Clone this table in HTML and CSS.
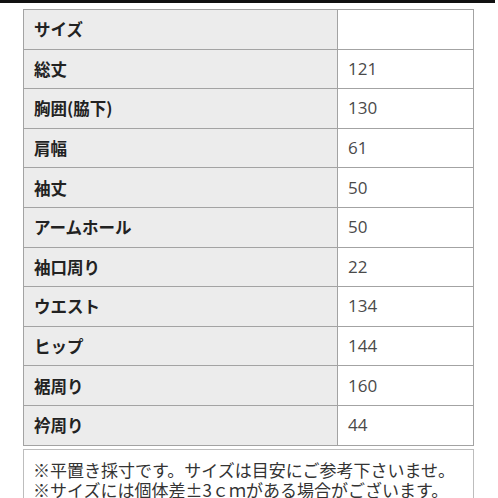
FILE: index.html
```html
<!DOCTYPE html>
<html lang="ja">
<head>
<meta charset="utf-8">
<link rel="stylesheet" href="styles.css">
</head>
<body>
<div class="topbar"></div>
<table class="size-table">
  <tr><th>サイズ</th><td></td></tr>
  <tr><th>総丈</th><td>121</td></tr>
  <tr><th>胸囲(脇下)</th><td>130</td></tr>
  <tr><th>肩幅</th><td>61</td></tr>
  <tr><th>袖丈</th><td>50</td></tr>
  <tr><th>アームホール</th><td>50</td></tr>
  <tr><th>袖口周り</th><td>22</td></tr>
  <tr><th>ウエスト</th><td>134</td></tr>
  <tr><th>ヒップ</th><td>144</td></tr>
  <tr><th>裾周り</th><td>160</td></tr>
  <tr><th>衿周り</th><td>44</td></tr>
</table>
<div class="note">
  <p>※平置き採寸です。サイズは目安にご参考下さいませ。</p>
  <p>※サイズには個体差±3ｃｍがある場合がございます。</p>
</div>
</body>
</html>
```
FILE: styles.css
```css
html, body {
  margin: 0;
  padding: 0;
  background: #fff;
  overflow: hidden;
}
body {
  font-family: "Noto Sans CJK JP", "Noto Sans", sans-serif;
  color: #333;
}
.topbar {
  width: 495px;
  height: 3px;
  background: #111;
}
.size-table {
  margin: 6px 0 0 23px;
  width: 451px;
  border-collapse: collapse;
  table-layout: fixed;
}
.size-table th,
.size-table td {
  height: 39.6px;
  padding: 0 0 0 10px;
  border: 1px solid #a3a3a3;
  text-align: left;
  vertical-align: middle;
  font-size: 16.5px;
  line-height: 20px;
  box-sizing: border-box;
}
.size-table th {
  width: 314px;
  background: #ececec;
  font-weight: bold;
  color: #222;
}
.size-table td {
  background: #fff;
  font-family: "Open Sans", "Noto Sans", sans-serif;
  font-weight: normal;
  color: #4a4a4a;
  font-size: 17px;
}
.note {
  margin: 3px 0 0 23px;
  width: 451px;
  box-sizing: border-box;
  border: 1px solid #bdbdbd;
  padding: 10px 0 10px 9px;
  font-size: 17px;
  line-height: 20px;
  color: #333;
}
.note p {
  margin: 0;
  white-space: nowrap;
}
```
